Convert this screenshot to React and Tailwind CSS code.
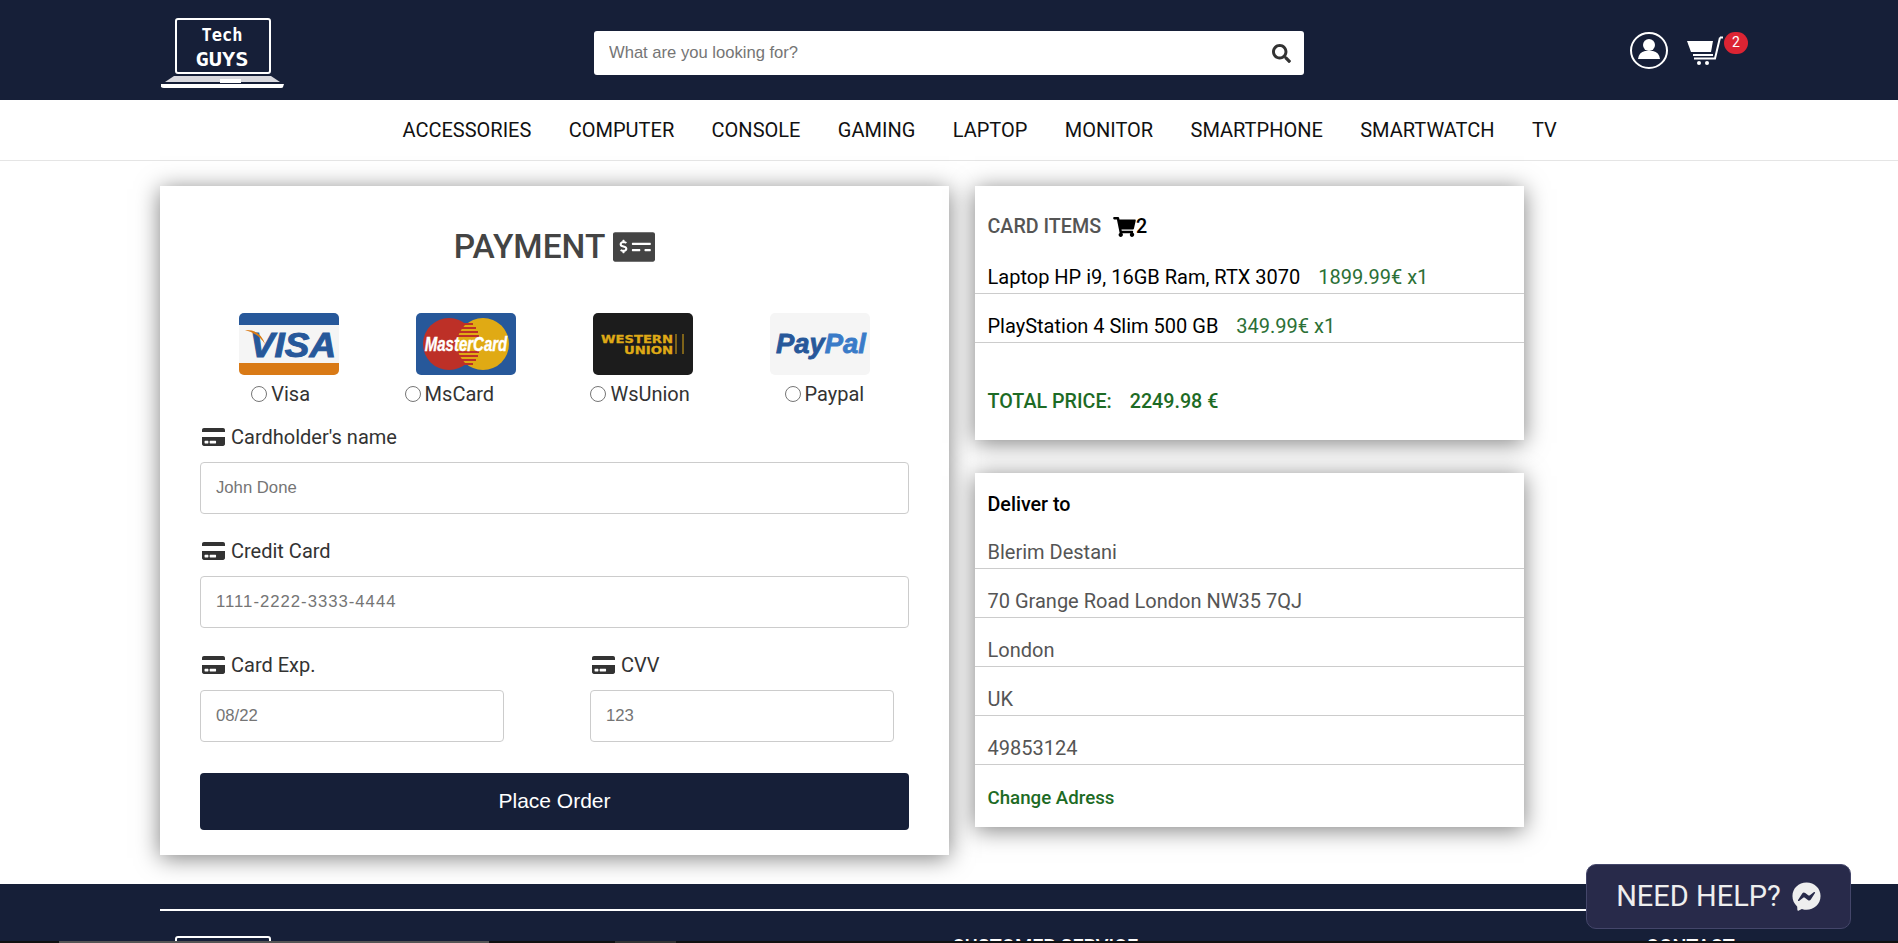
import { FaSearch, FaShoppingCart, FaCreditCard, FaMoneyCheckAlt, FaFacebookMessenger } from 'react-icons/fa';

const navItems = ['ACCESSORIES', 'COMPUTER', 'CONSOLE', 'GAMING', 'LAPTOP', 'MONITOR', 'SMARTPHONE', 'SMARTWATCH', 'TV'];
const deliverRows = ['Blerim Destani', '70 Grange Road London NW35 7QJ', 'London', 'UK', '49853124'];

function Logo({ bare }) {
  return (
    <svg width="125" height="70" viewBox="0 0 125 70" className="block shrink-0">
      <rect x="16" y="1" width="94" height="54" rx="2" fill="none" stroke="#fff" strokeWidth="2" />
      {!bare && (
        <>
          <text x="62" y="23" textAnchor="middle" fill="#fff" fontFamily="'DejaVu Sans Mono', monospace" fontWeight="700" fontSize="17" textLength="41" lengthAdjust="spacingAndGlyphs">Tech</text>
          <text x="62" y="48" textAnchor="middle" fill="#fff" fontFamily="'DejaVu Sans Mono', monospace" fontWeight="700" fontSize="20" textLength="53" lengthAdjust="spacingAndGlyphs">GUYS</text>
        </>
      )}
      <path d="M14 58 H111 L120 64 H5 Z" fill="#d8d8de" />
      <rect x="60" y="61" width="21" height="4" fill="#fff" />
      <path d="M1 66 H124 L123 69 Q123 70 121 70 H4 Q2 70 1 69 Z" fill="#fff" />
    </svg>
  );
}

function UserIcon() {
  return (
    <svg width="38" height="37" viewBox="0 0 38 37" className="block">
      <ellipse cx="19" cy="18.5" rx="18" ry="17.5" fill="none" stroke="#fff" strokeWidth="2" />
      <circle cx="19" cy="13" r="6" fill="#fff" />
      <path d="M8 27 Q9 20 15 19 H23 Q29 20 30 27 Z" fill="#fff" />
    </svg>
  );
}

function CartIcon() {
  return (
    <svg width="37" height="29" viewBox="0 0 37 29" className="block">
      <path d="M0 5 L26 5 L24 16 L4 16 Z" fill="#fff" />
      <path d="M33 1.5 H36 M33 1.5 L28 22.5 H7 M6 19 H26" fill="none" stroke="#fff" strokeWidth="2" />
      <circle cx="12" cy="27" r="2" fill="#fff" />
      <circle cx="20" cy="27" r="2" fill="#fff" />
    </svg>
  );
}

function VisaCard() {
  return (
    <svg width="100" height="62" viewBox="0 0 100 62" className="block rounded-[5px]">
      <rect width="100" height="62" fill="#f5f5f5" />
      <rect width="100" height="12" fill="#27589a" />
      <rect y="50" width="100" height="12" fill="#d97a16" />
      <text x="54" y="44" textAnchor="middle" fill="#27589a" stroke="#27589a" strokeWidth="1" fontFamily="'Liberation Sans', sans-serif" fontStyle="italic" fontWeight="700" fontSize="35" textLength="86" lengthAdjust="spacingAndGlyphs">VISA</text>
      <path d="M6 17 Q21 16 26 31 Q19 20 6 17 Z" fill="#d97a16" />
    </svg>
  );
}

function MasterCardLogo() {
  return (
    <svg width="100" height="62" viewBox="0 0 100 62" className="block rounded-[5px]">
      <rect width="100" height="62" fill="#27589a" />
      <circle cx="33" cy="31" r="26" fill="#bd3027" />
      <circle cx="67" cy="31" r="26" fill="#e0aa14" />
      <path d="M43 11 H57 M40 15 H60 M38 19 H62 M37 23 H63 M37 39 H63 M38 43 H62 M40 47 H60 M43 51 H57" stroke="#bd3027" strokeWidth="2" />
      <text transform="translate(50 38) scale(0.75 1)" textAnchor="middle" fill="#fff" stroke="#fff" strokeWidth="0.4" fontFamily="'Liberation Sans', sans-serif" fontStyle="italic" fontWeight="700" fontSize="20">MasterCard</text>
    </svg>
  );
}

function WesternUnion() {
  return (
    <svg width="100" height="62" viewBox="0 0 100 62" className="block rounded-[5px]">
      <rect width="100" height="62" fill="#1c1c1c" />
      <g fill="#dfa916" stroke="#dfa916" strokeWidth="0.3" fontFamily="'DejaVu Sans', sans-serif" fontWeight="700" fontSize="10">
        <text x="8" y="30" textLength="72" lengthAdjust="spacingAndGlyphs">WESTERN</text>
        <text x="31" y="41" textLength="49" lengthAdjust="spacingAndGlyphs">UNION</text>
      </g>
      <path d="M83 21 V41 M90 21 V41" stroke="#dfa916" strokeWidth="1" />
    </svg>
  );
}

function PaypalCard() {
  return (
    <svg width="100" height="62" viewBox="0 0 100 62" className="block rounded-[5px]">
      <rect width="100" height="62" fill="#f5f5f5" />
      <text x="6" y="40" strokeWidth="0.8" fontFamily="'Liberation Sans', sans-serif" fontStyle="italic" fontWeight="700" fontSize="27" textLength="90" lengthAdjust="spacingAndGlyphs">
        <tspan fill="#27589a" stroke="#27589a">Pay</tspan>
        <tspan fill="#3a7bc8" stroke="#3a7bc8">Pal</tspan>
      </text>
    </svg>
  );
}

function PayOption({ logo, label, shift }) {
  return (
    <div className="flex flex-col items-center">
      {logo}
      <label className={`mt-[7px] flex items-center text-[20px] leading-[24px] text-[#333] ${shift}`}>
        <input type="radio" name="pay" className="m-0 mr-[4px] h-[16px] w-[16px]" />
        {label}
      </label>
    </div>
  );
}

function FieldLabel({ children }) {
  return (
    <div className="flex h-[24px] items-center pl-[2px] text-[20px] text-[#333]">
      <FaCreditCard className="mr-[6px] h-[22px] w-[23px] text-[#333]" />
      {children}
    </div>
  );
}

function TextField({ placeholder, className }) {
  return (
    <input
      placeholder={placeholder}
      className={`mt-[13px] block h-[52px] rounded-[4px] border border-[#ccc] px-[15px] font-['Liberation_Sans',sans-serif] text-[16.7px] placeholder:text-[#757575] ${className}`}
    />
  );
}

export default function App() {
  return (
    <div className="relative flex h-[943px] flex-col overflow-hidden bg-white font-['Roboto',sans-serif]">
      <header className="flex h-[100px] shrink-0 items-center bg-[#161f38] pl-[160px]">
        <div className="mt-[6px]">
          <Logo />
        </div>
        <div className="ml-[309px] mt-[6px] flex h-[44px] w-[710px] items-center rounded-[3px] bg-white pl-[15px] pr-[13px]">
          <input
            placeholder="What are you looking for?"
            className="min-w-0 flex-1 font-['Liberation_Sans',sans-serif] text-[16.6px] outline-none placeholder:text-[#757575]"
          />
          <FaSearch className="h-[19px] w-[19px] text-[#333]" />
        </div>
        <div className="ml-[326px] flex items-center">
          <UserIcon />
          <div className="relative ml-[19px]">
            <CartIcon />
            <span className="absolute left-[37px] top-[-4px] flex h-[22px] w-[24px] items-center justify-center rounded-full bg-[#dc2433] text-[14px] text-white">2</span>
          </div>
        </div>
      </header>

      <nav className="flex h-[61px] shrink-0 items-center gap-[37.4px] border-b border-[#e5e5e5] pl-[402.5px] text-[20px] text-[#111]">
        {navItems.map((item) => (
          <span key={item}>{item}</span>
        ))}
      </nav>

      <main className="flex h-[723px] shrink-0 items-start gap-[26px] pl-[160px] pt-[25px]">
        <section className="h-[669px] w-[789px] bg-white px-[40px] pt-[43px] shadow-[0_3px_22px_rgba(0,0,0,0.5)]">
          <h1 className="flex h-[36px] items-center justify-center text-[33.5px] font-medium text-[#444]">
            PAYMENT
            <FaMoneyCheckAlt className="ml-[8px] h-[36px] w-[42px] text-[#444]" />
          </h1>
          <div className="mt-[48px] grid grid-cols-4">
            <PayOption logo={<VisaCard />} label="Visa" shift="mr-[16px]" />
            <PayOption logo={<MasterCardLogo />} label="MsCard" shift="mr-[33px]" />
            <PayOption logo={<WesternUnion />} label="WsUnion" shift="mr-[6px]" />
            <PayOption logo={<PaypalCard />} label="Paypal" shift="ml-[8px]" />
          </div>
          <div className="mt-[19px]">
            <FieldLabel>Cardholder's name</FieldLabel>
            <TextField placeholder="John Done" className="w-full" />
          </div>
          <div className="mt-[25px]">
            <FieldLabel>Credit Card</FieldLabel>
            <TextField placeholder="1111-2222-3333-4444" className="w-full tracking-[1px]" />
          </div>
          <div className="mt-[25px] flex gap-[86px]">
            <div>
              <FieldLabel>Card Exp.</FieldLabel>
              <TextField placeholder="08/22" className="w-[304px]" />
            </div>
            <div>
              <FieldLabel>CVV</FieldLabel>
              <TextField placeholder="123" className="w-[304px]" />
            </div>
          </div>
          <button className="mt-[31px] block h-[57px] w-full rounded-[4px] bg-[#161f38] pb-[2px] font-['Liberation_Sans',sans-serif] text-[21px] text-white">
            Place Order
          </button>
        </section>

        <div className="flex w-[549px] flex-col gap-[33px]">
          <section className="h-[254px] bg-white text-[20px] shadow-[0_3px_22px_rgba(0,0,0,0.5)]">
            <div className="flex h-[59px] items-end pb-[3px] pl-[12.5px] text-[19.7px] font-medium text-[#555]">
              CARD ITEMS
              <FaShoppingCart className="mb-[5px] ml-[12px] h-[20px] w-[23px] text-black" />
              <span className="text-black">2</span>
            </div>
            <div className="flex h-[49px] items-end border-b border-[#ccc] pb-[1px] pl-[12.5px] text-black">
              Laptop HP i9, 16GB Ram, RTX 3070
              <span className="ml-[18px] text-[#2c7036]">1899.99€ x1</span>
            </div>
            <div className="flex h-[49px] items-end border-b border-[#ccc] pb-[1px] pl-[12.5px] text-black">
              PlayStation 4 Slim 500 GB
              <span className="ml-[18px] text-[#2c7036]">349.99€ x1</span>
            </div>
            <div className="pl-[12.5px] pt-[44px] text-[19.7px] font-medium text-[#1d6b25]">
              TOTAL PRICE:
              <span className="ml-[18px]">2249.98 €</span>
            </div>
          </section>

          <section className="h-[354px] bg-white text-[20px] shadow-[0_3px_22px_rgba(0,0,0,0.5)]">
            <div className="flex h-[47px] items-end pl-[12.5px] text-[19.7px] font-medium text-black">Deliver to</div>
            {deliverRows.map((row) => (
              <div key={row} className="flex h-[49px] items-end border-b border-[#ccc] pb-[1px] pl-[12.5px] text-[#555]">
                {row}
              </div>
            ))}
            <div className="pl-[12.5px] pt-[19px] text-[18.7px] font-medium text-[#1d6b25]">Change Adress</div>
          </section>
        </div>
      </main>

      <footer className="h-[57px] shrink-0 overflow-hidden bg-[#161f38] pl-[160px] pt-[25px]">
        <div className="h-[2px] w-[1578px] bg-white" />
        <div className="flex pt-[25px]">
          <Logo bare />
          <span className="ml-[667px] mt-[2px] text-[19.7px] leading-[20px] font-medium text-white">CUSTOMER SERVICE</span>
          <span className="ml-[508px] mt-[2px] text-[19.7px] leading-[20px] font-medium text-white">CONTACT</span>
        </div>
      </footer>
      <div className="relative flex h-[2px] shrink-0 bg-[#111] pl-[59px]">
        <div className="w-[430px] bg-[#555]" />
        <div className="ml-[126px] w-[61px] bg-[#333]" />
      </div>

      <div className="absolute left-[1586px] top-[864px] flex h-[65px] w-[265px] items-center justify-center rounded-[10px] border border-[#44466a] bg-[#282a4a] text-[29px] text-[#eee]">
        NEED HELP?
        <FaFacebookMessenger className="ml-[11px] h-[29px] w-[29px] text-[#eee]" />
      </div>
    </div>
  );
}
